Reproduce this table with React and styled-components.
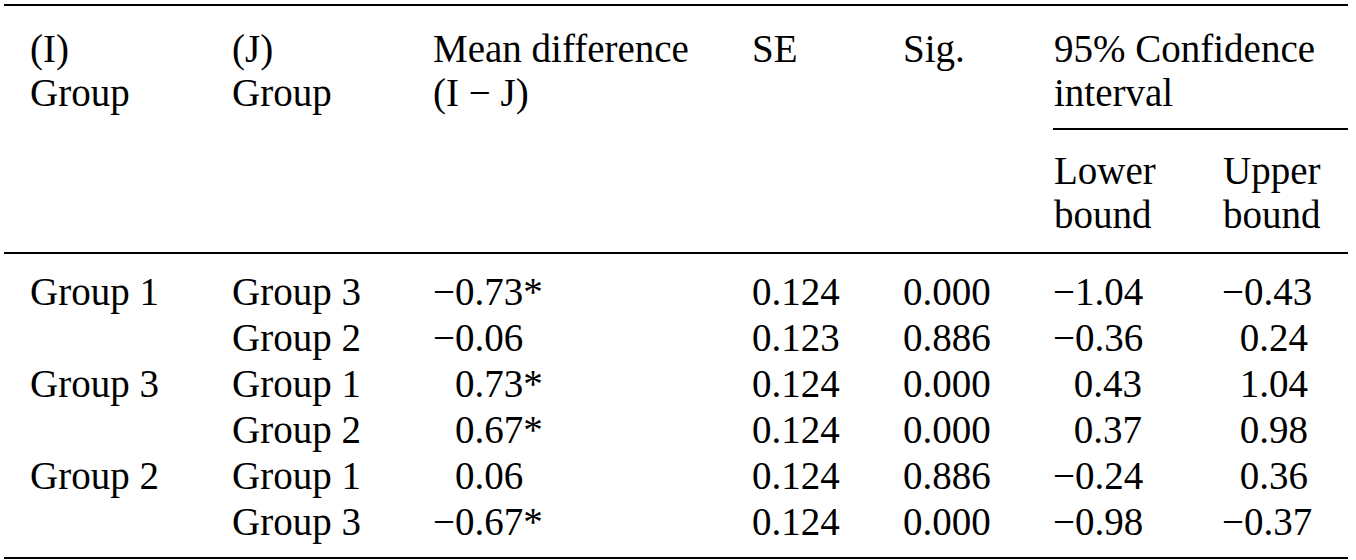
import React from "react";
import styled, { createGlobalStyle } from "styled-components";

const GlobalStyle = createGlobalStyle`
  html, body {
    margin: 0;
    padding: 0;
    background: #fff;
  }
  body {
    font-family: "Liberation Serif", "Times New Roman", serif;
    color: #000;
  }
`;

const Page = styled.div`
  padding: 4px 8px 0 4px;
`;

const Table = styled.table`
  width: 1344px;
  table-layout: fixed;
  border-collapse: collapse;
  border-top: 2px solid #000;
  font-size: 39px;
`;

const Col = styled.col`
  width: ${(p) => p.$w}px;
`;

const HeadCell = styled.th`
  font-weight: normal;
  text-align: left;
  vertical-align: top;
  line-height: 44px;
  padding: ${(p) => (p.$sub ? "19px 0 15px" : "21px 0 12px")};
  padding-left: ${(p) => (p.$first ? "26px" : p.$sub ? "1px" : "0")};
  border-bottom: 2px solid #000;
  white-space: nowrap;
`;

const GroupHeadCell = styled(HeadCell)`
  padding: 21px 0 13px 1px;
`;

const Cell = styled.td`
  line-height: 46px;
  padding: 0;
  padding-top: ${(p) => (p.$top ? "15px" : "0")};
  padding-bottom: ${(p) => (p.$bottom ? "12px" : "0")};
  padding-left: ${(p) => (p.$first ? "26px" : "0")};
  padding-right: ${(p) => p.$right || 0}px;
  text-align: ${(p) => (p.$right ? "right" : "left")};
  border-bottom: ${(p) => (p.$bottom ? "2px solid #000" : "none")};
  white-space: nowrap;
`;

const Signed = styled.span`
  padding-left: ${(p) => (p.$positive ? "0.564em" : "0")};
`;

const rows = [
  ["Group 1", "Group 3", "−0.73*", "0.124", "0.000", "−1.04", "−0.43"],
  ["", "Group 2", "−0.06", "0.123", "0.886", "−0.36", "0.24"],
  ["Group 3", "Group 1", "0.73*", "0.124", "0.000", "0.43", "1.04"],
  ["", "Group 2", "0.67*", "0.124", "0.000", "0.37", "0.98"],
  ["Group 2", "Group 1", "0.06", "0.124", "0.886", "−0.24", "0.36"],
  ["", "Group 3", "−0.67*", "0.124", "0.000", "−0.98", "−0.37"],
];

const widths = [228, 201, 319, 151, 150, 169, 126];

export default function App() {
  return (
    <Page>
      <GlobalStyle />
      <Table>
        <colgroup>
          {widths.map((w, i) => (
            <Col key={i} $w={w} />
          ))}
        </colgroup>
        <thead>
          <tr>
            <HeadCell rowSpan={2} $first>
              (I)<br />Group
            </HeadCell>
            <HeadCell rowSpan={2}>
              (J)<br />Group
            </HeadCell>
            <HeadCell rowSpan={2}>
              Mean difference<br />(I − J)
            </HeadCell>
            <HeadCell rowSpan={2}>SE</HeadCell>
            <HeadCell rowSpan={2}>Sig.</HeadCell>
            <GroupHeadCell colSpan={2}>
              95% Confidence<br />interval
            </GroupHeadCell>
          </tr>
          <tr>
            <HeadCell $sub>
              Lower<br />bound
            </HeadCell>
            <HeadCell $sub>
              Upper<br />bound
            </HeadCell>
          </tr>
        </thead>
        <tbody>
          {rows.map((r, i) => {
            const top = i === 0;
            const bottom = i === rows.length - 1;
            return (
              <tr key={i}>
                <Cell $first $top={top} $bottom={bottom}>{r[0]}</Cell>
                <Cell $top={top} $bottom={bottom}>{r[1]}</Cell>
                <Cell $top={top} $bottom={bottom}>
                  <Signed $positive={!r[2].startsWith("−")}>{r[2]}</Signed>
                </Cell>
                <Cell $top={top} $bottom={bottom}>{r[3]}</Cell>
                <Cell $top={top} $bottom={bottom}>{r[4]}</Cell>
                <Cell $top={top} $bottom={bottom} $right={80}>{r[5]}</Cell>
                <Cell $top={top} $bottom={bottom} $right={40}>{r[6]}</Cell>
              </tr>
            );
          })}
        </tbody>
      </Table>
    </Page>
  );
}
